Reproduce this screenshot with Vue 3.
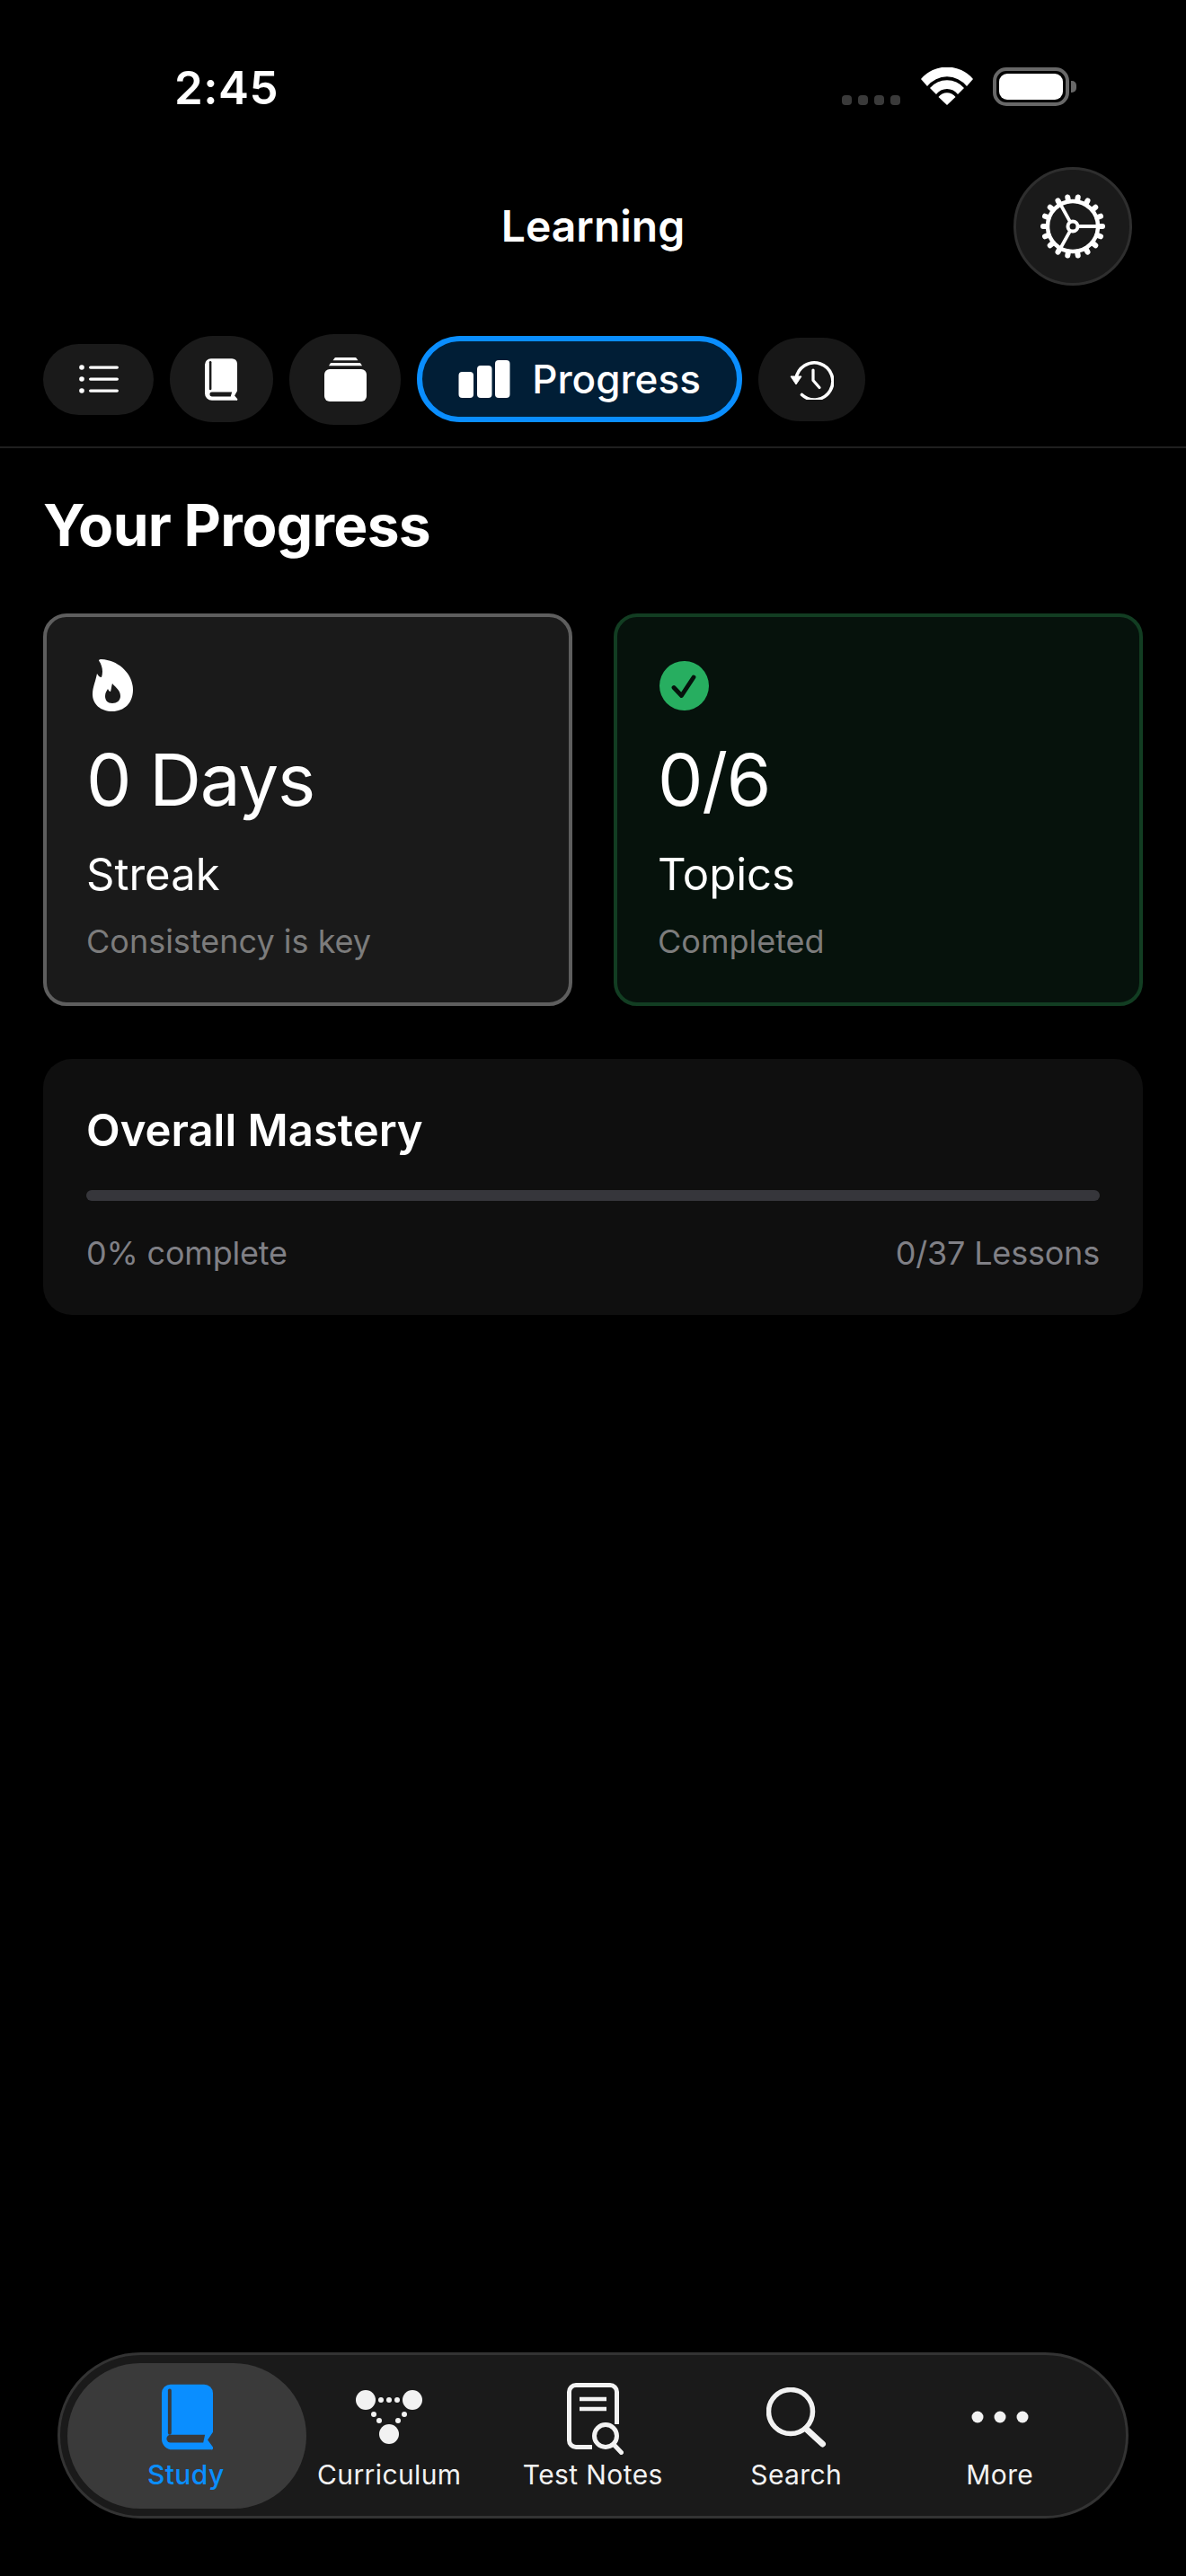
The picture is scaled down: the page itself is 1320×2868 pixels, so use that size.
<script setup>
const navItems = [
  { id: 'study', label: 'Study', active: true },
  { id: 'curriculum', label: 'Curriculum' },
  { id: 'notes', label: 'Test Notes' },
  { id: 'search', label: 'Search' },
  { id: 'more', label: 'More' },
]
const gearTeeth = Array.from({ length: 18 }, (_, i) => i * 20)
</script>

<template>
  <div class="screen">
    <div class="status">
      <span class="time">2:45</span>
      <div class="status-icons">
        <div class="signal"><i></i><i></i><i></i><i></i></div>
        <svg class="wifi" width="58" height="42" viewBox="0 0 58 42" fill="#fff">
          <path d="M0 13 A38 38 0 0 1 58 13 L51 21 A28 28 0 0 0 7 21 Z" />
          <path d="M10 23 A25 25 0 0 1 48 23 L41 30 A15 15 0 0 0 17 30 Z" />
          <path d="M19.500 33 A12 12 0 0 1 38.500 33 L29 42 Z" />
        </svg>
        <div class="battery"><div class="battery-fill"></div></div>
        <div class="battery-cap"></div>
      </div>
    </div>

    <header class="header">
      <h1>Learning</h1>
      <button class="gear">
        <svg width="72" height="72" viewBox="0 0 72 72" fill="none" stroke="#fff">
          <circle cx="36" cy="36" r="28" stroke-width="4.500" />
          <line
            v-for="angle in gearTeeth"
            :key="angle"
            x1="36"
            y1="7"
            x2="36"
            y2="3"
            stroke-width="6"
            stroke-linecap="round"
            :transform="`rotate(${angle + 10} 36 36)`"
          />
          <circle cx="36" cy="36" r="5.500" stroke-width="4" />
          <path d="M41 36H64M33 30.800L22.300 11.600M33 41.200L22.300 60.400" stroke-width="3.800" />
        </svg>
      </button>
    </header>

    <nav class="tabs">
      <button class="tab tab-list">
        <svg width="44" height="32" viewBox="0 0 44 32" fill="#fff">
          <circle cx="3" cy="3" r="2.800" />
          <circle cx="3" cy="16" r="2.800" />
          <circle cx="3" cy="29" r="2.800" />
          <rect x="11" y="1.400" width="33" height="3.400" rx="1.700" />
          <rect x="11" y="14.400" width="33" height="3.400" rx="1.700" />
          <rect x="11" y="27.400" width="33" height="3.400" rx="1.700" />
        </svg>
      </button>
      <button class="tab tab-book">
        <svg width="37" height="47" viewBox="0 0 38 48">
          <path
            d="M7 0H31A6 6 0 0 1 37 6V37L34 42.500L37 46A1.200 1.200 0 0 1 36 48H8A8 8 0 0 1 0 40V7A7 7 0 0 1 7 0Z"
            fill="#fff"
          />
          <rect x="5" y="3" width="2.600" height="33" rx="1.300" fill="#1a1a1a" />
          <path d="M8 38.500H31L29.500 43.500H8A2.500 2.500 0 0 1 8 38.500Z" fill="#1a1a1a" />
        </svg>
      </button>
      <button class="tab tab-stack">
        <svg width="47" height="49" viewBox="0 0 47 49" fill="#fff">
          <path d="M9.500 3.300L11.500 0.500A1.500 1.500 0 0 1 12.500 0H34.500A1.500 1.500 0 0 1 35.500 0.500L37.500 3.300Z" />
          <path d="M5 9.300L6.500 6.800A1.500 1.500 0 0 1 8 6H39A1.500 1.500 0 0 1 40.500 6.800L42 9.300Z" />
          <rect x="0" y="13" width="47" height="36" rx="6" />
        </svg>
      </button>
      <button class="tab tab-active">
        <svg width="58" height="42" viewBox="0 0 57 42" fill="#fff">
          <rect x="0" y="13" width="16.500" height="29" rx="4" />
          <rect x="20.500" y="6" width="16.500" height="36" rx="4" />
          <rect x="40.500" y="0" width="16.500" height="42" rx="4" />
        </svg>
        <span>Progress</span>
      </button>
      <button class="tab tab-history">
        <svg width="49" height="45" viewBox="0 0 48 45" fill="none" stroke="#fff" stroke-width="3.600">
          <path d="M6.500 22A20.500 20.500 0 1 1 13 39.500" stroke-linecap="round" />
          <path d="M0.500 19H12.500L6.500 28Z" fill="#fff" stroke-width="1" stroke-linejoin="round" />
          <path d="M25.500 12V23.500L32.500 31.500" stroke-width="3.200" stroke-linecap="round" stroke-linejoin="round" />
        </svg>
      </button>
    </nav>

    <main class="content">
      <h2>Your Progress</h2>

      <div class="stats">
        <section class="stat stat-streak">
          <svg class="stat-icon flame" width="45" height="58" viewBox="0 0 45 58">
            <path
              d="M7 1.500C7 0.500 8 0 10 0C29 1 45 16 45 34C45 49 35 58 22 58C9 58 0 50 0 39C0 31 3 26 5 16C7 19 8 20 10 20C12 14 11 7 7 1.500Z"
              fill="#fff"
            />
            <path
              d="M22 27C25 31 31 34 31 41C31 46 27 49 22 49C17 49 14 46 14 41C14 37 16 35 17 33C18 35 19 36 20 36C21 33 21 30 22 27Z"
              fill="#1a1a1a"
            />
          </svg>
          <div class="stat-value">0 Days</div>
          <div class="stat-label">Streak</div>
          <div class="stat-note">Consistency is key</div>
        </section>

        <section class="stat stat-topics">
          <svg class="stat-icon check" width="55" height="55" viewBox="0 0 55 55">
            <circle cx="27.500" cy="27.500" r="27.500" fill="#27ae60" />
            <path
              d="M16 29.500L24.500 38.500L38 18"
              fill="none"
              stroke="#06120c"
              stroke-width="4.800"
              stroke-linecap="round"
              stroke-linejoin="round"
            />
          </svg>
          <div class="stat-value">0/6</div>
          <div class="stat-label">Topics</div>
          <div class="stat-note">Completed</div>
        </section>
      </div>

      <section class="mastery">
        <h3>Overall Mastery</h3>
        <div class="track"></div>
        <div class="mastery-meta">
          <span>0% complete</span>
          <span>0/37 Lessons</span>
        </div>
      </section>
    </main>

    <div class="bottom-nav">
      <button
        v-for="item in navItems"
        :key="item.id"
        class="nav-item"
        :class="{ 'nav-active': item.active }"
      >
        <span class="nav-icon">
          <svg v-if="item.id === 'study'" class="study-icon" width="57" height="74" viewBox="0 0 58 74">
            <path
              d="M10 0H48A10 10 0 0 1 58 10V54L52 63L58 71A2 2 0 0 1 56 74H12A12 12 0 0 1 0 62V10A10 10 0 0 1 10 0Z"
              fill="#0a8eff"
            />
            <rect x="7" y="5" width="4" height="52" rx="2" fill="#3a3a3a" />
            <path d="M10 57H49L47 66H10A4.500 4.500 0 0 1 10 57Z" fill="#3a3a3a" />
          </svg>
          <svg v-else-if="item.id === 'curriculum'" width="74" height="60" viewBox="0 0 74 60" fill="#f2f2f2">
            <circle cx="11" cy="11" r="11" />
            <circle cx="63" cy="11" r="11" />
            <circle cx="37" cy="49" r="11" />
            <circle cx="28" cy="11" r="3" />
            <circle cx="37" cy="11" r="3" />
            <circle cx="46" cy="11" r="3" />
            <circle cx="20" cy="27" r="3" />
            <circle cx="26" cy="34" r="3" />
            <circle cx="54" cy="27" r="3" />
            <circle cx="47" cy="34" r="3" />
          </svg>
          <svg v-else-if="item.id === 'notes'" class="notes-icon" width="63" height="80" viewBox="0 0 63 80" fill="none" stroke="#f2f2f2">
            <path d="M28 71.500H10A7.500 7.500 0 0 1 2.500 64V10A7.500 7.500 0 0 1 10 2.500H48A7.500 7.500 0 0 1 55.500 10V46" stroke-width="5" />
            <path d="M14 18H44M14 29H44" stroke-width="4.500" />
            <circle cx="43" cy="59" r="12.500" stroke-width="5" />
            <path d="M52 68.500L60.500 77.500" stroke-width="5" stroke-linecap="round" />
          </svg>
          <svg v-else-if="item.id === 'search'" width="67" height="67" viewBox="0 0 67 67" fill="none" stroke="#f2f2f2">
            <circle cx="27" cy="27" r="24.500" stroke-width="5.500" />
            <path d="M44 46L62.500 63" stroke-width="7" stroke-linecap="round" />
          </svg>
          <svg v-else width="64" height="14" viewBox="0 0 64 14" fill="#f2f2f2">
            <circle cx="7" cy="7" r="6.500" />
            <circle cx="32" cy="7" r="6.500" />
            <circle cx="57" cy="7" r="6.500" />
          </svg>
        </span>
        <span class="nav-label">{{ item.label }}</span>
      </button>
    </div>
  </div>
</template>

<style scoped>
.screen {
  position: relative;
  width: 1320px;
  height: 2868px;
  background: #000;
  color: #fff;
  display: flex;
  flex-direction: column;
  font-family: Inter, "Liberation Sans", sans-serif;
  overflow: hidden;
}

button {
  font-family: inherit;
  border: none;
  color: inherit;
  padding: 0;
}

.status {
  height: 174px;
  flex-shrink: 0;
  padding: 0 122px 0 194px;
  display: flex;
  justify-content: space-between;
  align-items: flex-start;
  box-sizing: border-box;
}

.time {
  margin-top: 70px;
  font-size: 51px;
  line-height: 56px;
  font-weight: 600;
  letter-spacing: 0.5px;
}

.status-icons {
  margin-top: 75px;
  display: flex;
  align-items: flex-start;
}

.signal {
  display: flex;
  gap: 7px;
  margin: 31px 23px 0 0;
}

.signal i {
  width: 11px;
  height: 11px;
  border-radius: 4px;
  background: #3a3a3a;
}

.battery {
  width: 85px;
  height: 43px;
  margin-left: 22px;
  border: 4px solid #686868;
  border-radius: 15px;
  padding: 3px;
  box-sizing: border-box;
}

.battery-fill {
  width: 100%;
  height: 100%;
  background: #fff;
  border-radius: 9px;
}

.battery-cap {
  width: 6px;
  height: 13px;
  margin: 15px 0 0 2px;
  background: #686868;
  border-radius: 0 5px 5px 0;
}

.header {
  height: 156px;
  flex-shrink: 0;
  display: flex;
  align-items: center;
  justify-content: center;
  position: relative;
}

.header h1 {
  margin: 0;
  font-size: 48px;
  font-weight: 600;
  line-height: 60px;
}

.gear {
  position: absolute;
  right: 60px;
  top: 12px;
  width: 132px;
  height: 132px;
  border-radius: 50%;
  background: #1a1a1a;
  border: 3px solid #2e2e2e;
  display: flex;
  align-items: center;
  justify-content: center;
}

.tabs {
  height: 169px;
  flex-shrink: 0;
  padding: 17px 48px 0;
  display: flex;
  align-items: center;
  gap: 18px;
  border-bottom: 2px solid #1f1f1f;
  box-sizing: border-box;
}

.tab {
  background: #1a1a1a;
  border-radius: 50px;
  display: flex;
  align-items: center;
  justify-content: center;
  flex-shrink: 0;
}

.tab-list {
  width: 123px;
  height: 79px;
}

.tab-book {
  width: 115px;
  height: 96px;
}

.tab-stack {
  width: 124px;
  height: 101px;
}

.tab-active {
  width: 362px;
  height: 96px;
  gap: 24px;
  background: #011e36;
  border: 6px solid #0a8eff;
  font-size: 44px;
  font-weight: 500;
}

.tab-history {
  width: 119px;
  height: 93px;
  background: #171717;
}

.content {
  padding: 51px 48px 0;
  box-sizing: border-box;
}

.content h2 {
  margin: 0;
  font-size: 64px;
  line-height: 70px;
  font-weight: 700;
  letter-spacing: -0.7px;
}

.stats {
  display: grid;
  grid-template-columns: 1fr 1fr;
  gap: 46px;
  margin-top: 63px;
}

.stat {
  height: 437px;
  box-sizing: border-box;
  border-radius: 26px;
  border: 4px solid #5e5e5e;
  background: #1a1a1a;
  padding: 47px 44px 0;
}

.stat-topics {
  background: #06120c;
  border-color: #123d22;
}

.stat-icon {
  display: block;
}

.flame {
  margin-left: 7px;
}

.check {
  margin: 2px 0 0 3px;
}

.stat-value {
  margin-top: 30px;
  font-size: 80px;
  line-height: 92px;
  letter-spacing: -1.300px;
}

.stat-label {
  margin-top: 30px;
  font-size: 49px;
  line-height: 60px;
}

.stat-note {
  margin-top: 22px;
  font-size: 36px;
  line-height: 44px;
  color: #7c7c7c;
}

.stat-topics .stat-value {
  margin-top: 31px;
}

.stat-topics .stat-value,
.stat-topics .stat-label,
.stat-topics .stat-note {
  padding-left: 1px;
}

.mastery {
  margin-top: 59px;
  height: 285px;
  box-sizing: border-box;
  border-radius: 32px;
  background: #0f0f0f;
  padding: 50px 48px 0;
}

.mastery h3 {
  margin: 0;
  font-size: 49px;
  line-height: 60px;
  font-weight: 600;
}

.track {
  margin-top: 36px;
  height: 12px;
  border-radius: 6px;
  background: #36363b;
}

.mastery-meta {
  margin-top: 36px;
  display: flex;
  justify-content: space-between;
  font-size: 36px;
  line-height: 44px;
  letter-spacing: -0.2px;
  color: #808086;
}

.bottom-nav {
  position: absolute;
  left: 64px;
  top: 2619px;
  width: 1192px;
  height: 185px;
  box-sizing: border-box;
  border-radius: 93px;
  border: 3px solid #333;
  background: #1a1a1a;
  display: flex;
  padding: 9px 0 8px 26.500px;
  isolation: isolate;
}

.nav-item {
  position: relative;
  flex: 0 0 226.500px;
  background: none;
  display: flex;
  flex-direction: column;
  align-items: center;
  color: #f2f2f2;
}

.nav-active {
  color: #0a8eff;
  font-weight: 500;
}

.nav-active::before {
  content: "";
  position: absolute;
  z-index: -1;
  left: -18.500px;
  top: 0;
  bottom: 0;
  width: 266px;
  border-radius: 81px;
  background: #3a3a3a;
}

.nav-icon {
  height: 88px;
  margin-top: 16px;
  display: flex;
  align-items: center;
  justify-content: center;
}

.study-icon {
  margin-left: 4px;
}

.notes-icon {
  margin: 4px 0 0 6px;
}

.nav-label {
  font-size: 30px;
  line-height: 40px;
  white-space: nowrap;
  letter-spacing: 0.4px;
}
</style>

<style>
body {
  background: #000;
}
</style>
